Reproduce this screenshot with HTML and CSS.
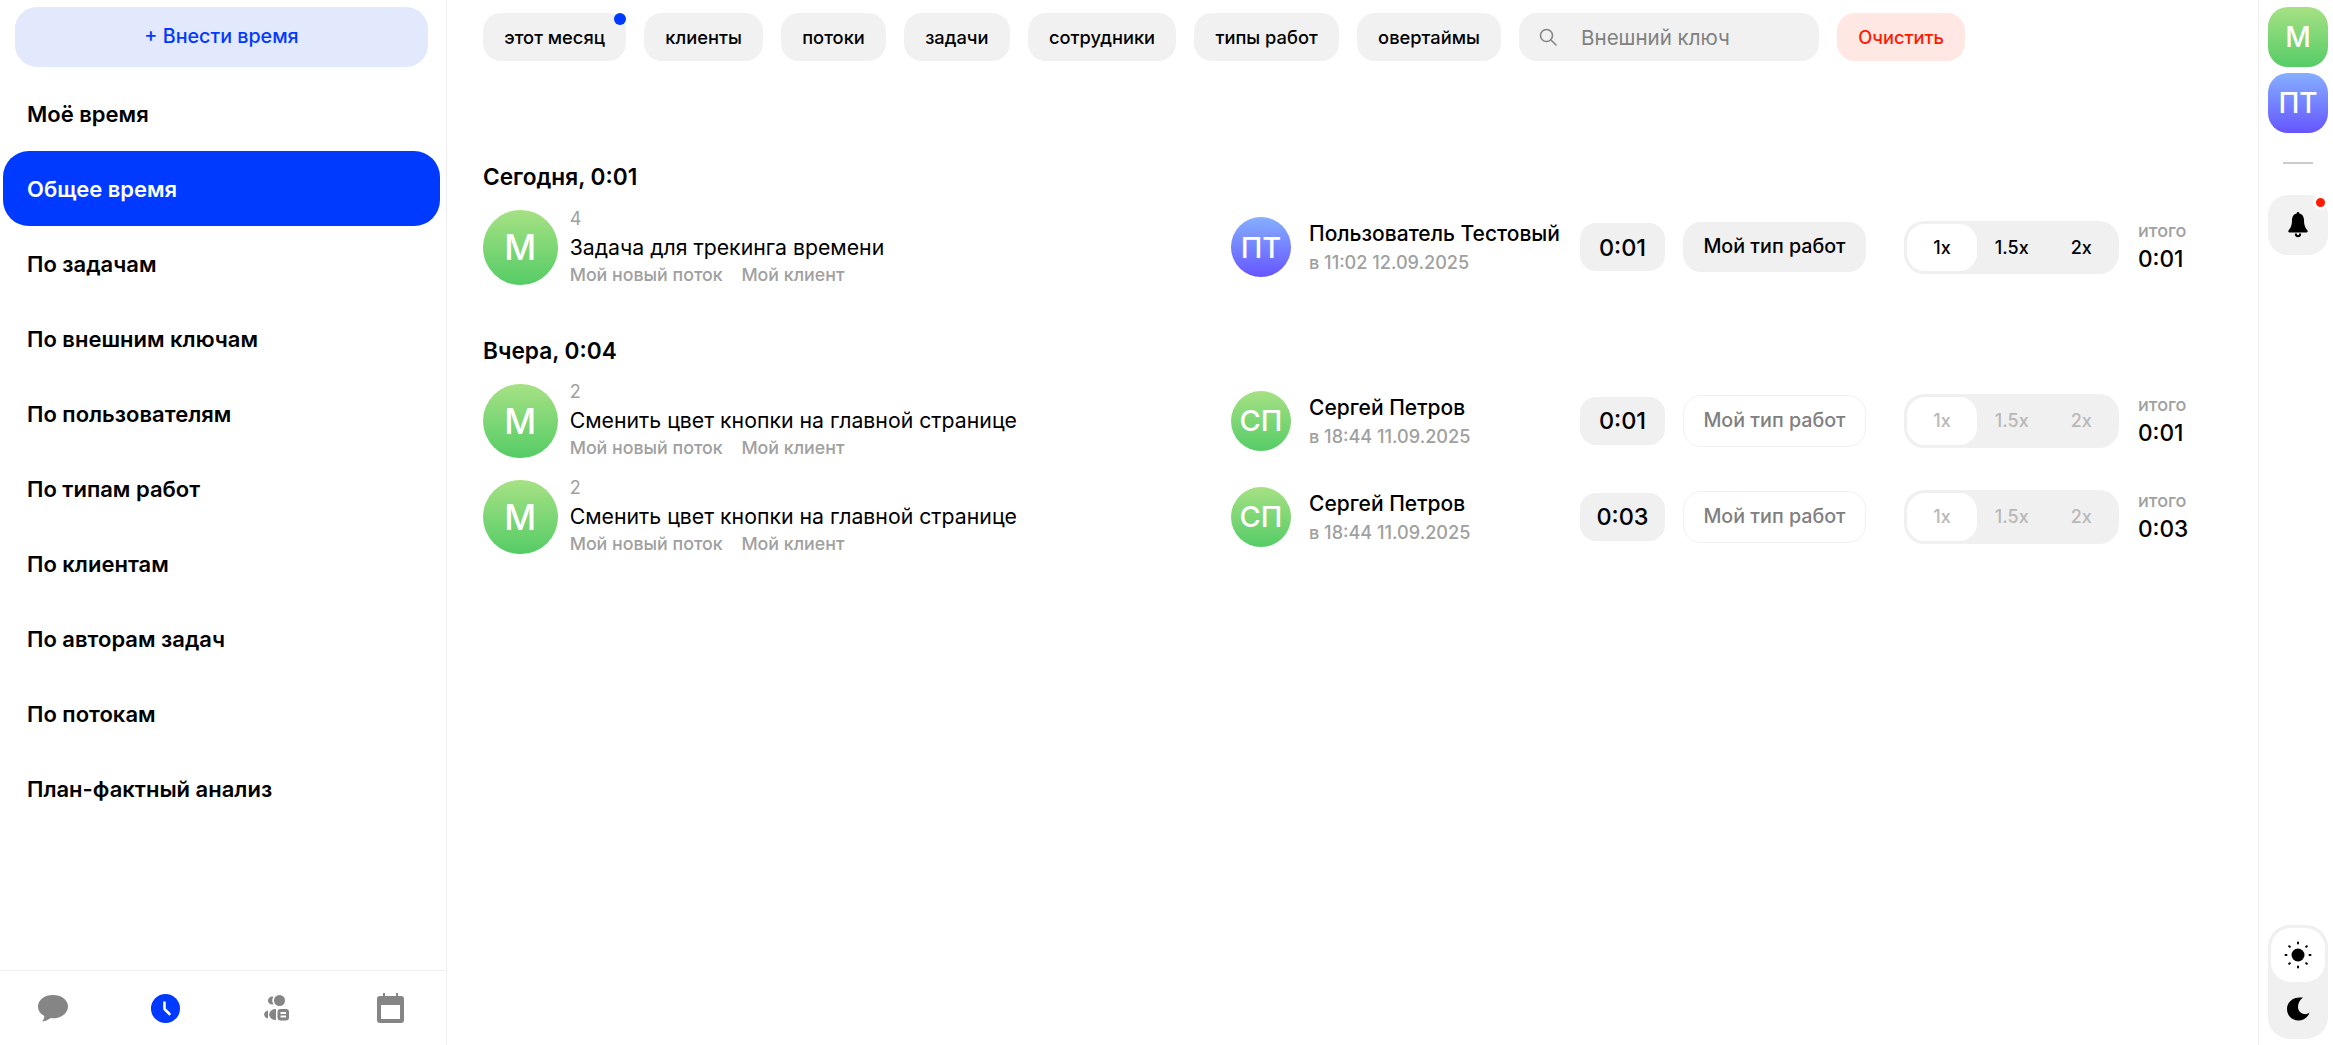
FILE: index.html
```html
<!DOCTYPE html>
<html lang="ru">
<head>
<meta charset="utf-8">
<title>Общее время</title>
<link rel="stylesheet" href="styles.css">
</head>
<body>
<div class="app">
  <aside class="sidebar">
    <button class="add-btn">+ Внести время</button>
    <nav class="nav">
      <a class="nav-item">Моё время</a>
      <a class="nav-item active">Общее время</a>
      <a class="nav-item">По задачам</a>
      <a class="nav-item">По внешним ключам</a>
      <a class="nav-item">По пользователям</a>
      <a class="nav-item">По типам работ</a>
      <a class="nav-item">По клиентам</a>
      <a class="nav-item">По авторам задач</a>
      <a class="nav-item">По потокам</a>
      <a class="nav-item">План-фактный анализ</a>
    </nav>
    <div class="tabs">
      <span class="tab"><svg width="30" height="27" viewBox="0 0 30 27"><path fill="#858585" d="M15 0C6.700 0 0 4.800 0 11.500c0 4.100 2.500 7.400 6.300 9.400.1 2-.8 4-2.300 5.600 3.200-.1 6.300-1.500 8.600-3.400.8.100 1.600.2 2.400.2 8.300 0 15-5.100 15-11.800S23.300 0 15 0z"/></svg></span>
      <span class="tab"><svg width="29" height="29" viewBox="0 0 29 29"><circle cx="14.500" cy="14.500" r="14.500" fill="#0039ff"/><path d="M13.500 8.500v6.500l5 5" fill="none" stroke="#fff" stroke-width="2.600" stroke-linecap="round" stroke-linejoin="round"/></svg></span>
      <span class="tab"><svg width="25" height="26" viewBox="0 0 25 26"><g fill="#858585"><circle cx="15.500" cy="5.500" r="5.500"/><path d="M9.500 1.800A4 4 0 1 0 9.500 9.200 6.500 6.500 0 0 1 9.500 1.800z"/><path d="M4 15.500V23.500A5 5 0 0 1 0 19.500 5 5 0 0 1 4 15.500z"/><path d="M12 14V25A7 7 0 0 1 5 19.500 7 7 0 0 1 12 14z"/><rect x="13.500" y="14" width="11.500" height="11.500" rx="3"/></g><path d="M16.500 18h5.500M16.500 21.500h5.500" stroke="#fff" stroke-width="1.800"/></svg></span>
      <span class="tab"><svg width="27" height="30" viewBox="0 0 27 30"><path fill="#858585" d="M6 0h2v3h11V0h2v3h3a3 3 0 0 1 3 3v21a3 3 0 0 1-3 3H3a3 3 0 0 1-3-3V6a3 3 0 0 1 3-3h3z"/><rect x="4" y="12" width="19" height="14" fill="#fff"/></svg></span>
    </div>
  </aside>

  <main class="main">
    <div class="filters">
      <span class="chip">этот месяц<i class="chip-dot"></i></span>
      <span class="chip">клиенты</span>
      <span class="chip">потоки</span>
      <span class="chip">задачи</span>
      <span class="chip">сотрудники</span>
      <span class="chip">типы работ</span>
      <span class="chip">овертаймы</span>
      <label class="search">
        <svg width="18" height="18" viewBox="0 0 18 18"><circle cx="7.500" cy="7.500" r="6" fill="none" stroke="#858585" stroke-width="1.600"/><path d="M12 12l5 5" stroke="#858585" stroke-width="1.600" stroke-linecap="round"/></svg>
        <span>Внешний ключ</span>
      </label>
      <span class="chip clear">Очистить</span>
    </div>

    <section class="day first">
      <h2 class="day-title">Сегодня, 0:01</h2>
      <div class="row">
        <div class="task">
          <div class="ava ava-task green">М</div>
          <div class="task-text">
            <div class="task-num">4</div>
            <div class="task-title">Задача для трекинга времени</div>
            <div class="task-sub"><span>Мой новый поток</span><span>Мой клиент</span></div>
          </div>
        </div>
        <div class="user">
          <div class="ava ava-user blue">ПТ</div>
          <div class="user-text">
            <div class="user-name">Пользователь Тестовый</div>
            <div class="user-date">в 11:02 12.09.2025</div>
          </div>
        </div>
        <div class="time">0:01</div>
        <div class="type">Мой тип работ</div>
        <div class="mult"><span class="on">1x</span><span>1.5x</span><span>2x</span></div>
        <div class="total"><small>итого</small><b>0:01</b></div>
      </div>
    </section>

    <section class="day">
      <h2 class="day-title">Вчера, 0:04</h2>
      <div class="row">
        <div class="task">
          <div class="ava ava-task green">М</div>
          <div class="task-text">
            <div class="task-num">2</div>
            <div class="task-title">Сменить цвет кнопки на главной странице</div>
            <div class="task-sub"><span>Мой новый поток</span><span>Мой клиент</span></div>
          </div>
        </div>
        <div class="user">
          <div class="ava ava-user green">СП</div>
          <div class="user-text">
            <div class="user-name">Сергей Петров</div>
            <div class="user-date">в 18:44 11.09.2025</div>
          </div>
        </div>
        <div class="time">0:01</div>
        <div class="type off">Мой тип работ</div>
        <div class="mult off"><span class="on">1x</span><span>1.5x</span><span>2x</span></div>
        <div class="total"><small>итого</small><b>0:01</b></div>
      </div>
      <div class="row">
        <div class="task">
          <div class="ava ava-task green">М</div>
          <div class="task-text">
            <div class="task-num">2</div>
            <div class="task-title">Сменить цвет кнопки на главной странице</div>
            <div class="task-sub"><span>Мой новый поток</span><span>Мой клиент</span></div>
          </div>
        </div>
        <div class="user">
          <div class="ava ava-user green">СП</div>
          <div class="user-text">
            <div class="user-name">Сергей Петров</div>
            <div class="user-date">в 18:44 11.09.2025</div>
          </div>
        </div>
        <div class="time">0:03</div>
        <div class="type off">Мой тип работ</div>
        <div class="mult off"><span class="on">1x</span><span>1.5x</span><span>2x</span></div>
        <div class="total"><small>итого</small><b>0:03</b></div>
      </div>
    </section>
  </main>

  <aside class="rail">
    <div class="tile green">М</div>
    <div class="tile blue">ПТ</div>
    <div class="sep"></div>
    <div class="tile bell">
      <svg width="20" height="26" viewBox="0 0 20 26"><path d="M10 0c.8 0 1.300.6 1.300 1.400 3.200.7 4.700 3.200 4.700 6.600 0 4 .7 7.500 3.300 10.300.8.900.4 2.200-.8 2.200H1.500c-1.200 0-1.600-1.300-.8-2.200C3.300 15.500 4 12 4 8c0-3.400 1.500-5.900 4.700-6.600C8.700.6 9.200 0 10 0z"/><path d="M6.800 21.500a3.200 3.800 0 0 0 6.400 0h-2a1.200 1.800 0 0 1-2.400 0z"/></svg>
      <i class="bell-dot"></i>
    </div>
    <div class="theme">
      <div class="theme-opt on">
        <svg width="28" height="28" viewBox="0 0 28 28"><circle cx="14" cy="14" r="6.500"/><g stroke="#000" stroke-width="2" stroke-linecap="round"><path d="M14 1.500v1M14 25.500v1M1.500 14h1M25.500 14h1M5.200 5.200l.6.6M22.200 22.200l.6.6M5.200 22.800l.6-.6M22.200 5.800l.6-.6"/></g></svg>
      </div>
      <div class="theme-opt">
        <svg width="24" height="24" viewBox="0 0 24 24"><path d="M13.500 1C7 1 1 5.700 1 12.500S6.200 24 12.500 24c5.300 0 9.700-3.300 11-8-1.500 1.300-3.300 1.800-5.200 1.600-3.600-.4-6.300-3.300-6.300-7 0-4 1.700-7.300 5-9.600z" transform="translate(0 -.5)"/></svg>
      </div>
    </div>
  </aside>
</div>
</body>
</html>
```

FILE: styles.css
```css
* { box-sizing: border-box; }
html, body { margin: 0; height: 100%; }
body { font-family: Inter, "Noto Sans", sans-serif; color: #000; background: #fff; }

.app { display: flex; height: 100vh; overflow: hidden; }

/* left sidebar */
.sidebar { width: 447px; flex: none; display: flex; flex-direction: column; border-right: 1px solid #f0f0f0; }
.add-btn { margin: 7px 18px 0 15px; height: 60px; flex: none; padding: 0 0 2px; border: 0; border-radius: 22px; background: #e3e9fd; color: #0039ff; font: 500 19.7px Inter, sans-serif; }
.nav { margin-top: 9px; flex: 1; display: flex; flex-direction: column; }
.nav-item { height: 75px; flex: none; margin: 0 6px 0 3px; padding-left: 24px; display: flex; align-items: center; border-radius: 26px; font-size: 22px; font-weight: 600; }
.nav-item.active { background: #0039ff; color: #fff; }
.tabs { height: 75px; flex: none; padding-left: 38px; border-top: 1px solid #f0f0f0; display: flex; align-items: center; }
.tab { display: flex; align-items: center; justify-content: center; }
.tab:nth-child(2) { margin-left: 83px; }
.tab:nth-child(3) { margin-left: 84px; }
.tab:nth-child(4) { margin-left: 88px; }

/* main column */
.main { flex: 1; min-width: 0; padding: 13px 0 0 36px; }
.filters { display: flex; gap: 18px; }
.chip { position: relative; height: 48px; padding: 0 21.2px; display: flex; align-items: center; border-radius: 18px; background: #f1f1f1; font-size: 18.3px; font-weight: 500; white-space: nowrap; }
.chip-dot { position: absolute; top: 0; right: 0; width: 12px; height: 12px; border-radius: 50%; background: #0039ff; }
.chip.clear { background: #ffe8e4; color: #ff1a00; }
.search { width: 300px; height: 48px; padding-left: 20px; display: flex; align-items: center; gap: 24px; border-radius: 18px; background: #f1f1f1; color: #808080; font-size: 20.5px; }

.day { margin-top: 51px; }
.day.first { margin-top: 101px; }
.day-title { margin: 0 0 18px; font-size: 22.67px; line-height: 30px; font-weight: 600; }

.row { display: flex; align-items: center; height: 74.67px; margin-bottom: 21.33px; }
.row:last-child { margin-bottom: 0; }

.ava { display: flex; align-items: center; justify-content: center; flex: none; border-radius: 50%; color: #fff; font-weight: 500; }
.green { background: linear-gradient(#a6e184, #55cc66); }
.blue { background: linear-gradient(#85b0ff, #6655ff); }
.ava-task { width: 74.67px; height: 74.67px; font-size: 35px; }
.ava-user { width: 60px; height: 60px; font-size: 29px; }

.task { width: 748px; flex: none; display: flex; align-items: center; gap: 12px; }
.task-text { display: flex; flex-direction: column; padding-bottom: 3px; }
.task-num { font-size: 18px; line-height: 22px; color: #a0a0a0; }
.task-title { font-size: 21.25px; line-height: 35px; font-weight: 400; }
.task-sub { display: flex; gap: 18.67px; font-size: 17.8px; line-height: 19px; font-weight: 500; color: #a0a0a0; }

.user { width: 349px; flex: none; display: flex; align-items: center; gap: 18px; }
.user-text { padding-top: 2px; }
.user-name { font-size: 21px; line-height: 28px; font-weight: 500; }
.user-date { font-size: 18.1px; line-height: 28px; font-weight: 500; color: #a0a0a0; }

.time { width: 85px; height: 48px; flex: none; display: flex; align-items: center; justify-content: center; border-radius: 16px; background: #f0f0f0; font-size: 23.5px; font-weight: 500; }
.type { width: 183px; height: 50px; margin-left: 18px; flex: none; display: flex; align-items: center; justify-content: center; padding-bottom: 2px; border-radius: 18px; background: #f0f0f0; font-size: 19.7px; font-weight: 500; }
.type.off { height: 52px; background: #fff; border: 1px solid #f1f1f1; color: #808080; }

.mult { width: 215px; height: 53.33px; margin-left: 38px; flex: none; padding: 3px; display: flex; border-radius: 20px; background: #f0f0f0; font-size: 18px; font-weight: 500; }
.mult span { flex: 1; display: flex; align-items: center; justify-content: center; border-radius: 18px; }
.mult .on { flex: none; width: 70px; background: #fff; }
.mult.off { color: #b8b8b8; }

.total { margin-left: 19px; display: flex; flex-direction: column; }
.total small { font-size: 18px; line-height: 24px; font-weight: 500; color: #a0a0a0; }
.total b { font-size: 22.67px; line-height: 32px; font-weight: 500; }

/* right rail */
.rail { width: 75px; flex: none; padding: 7px 5px 6px 9px; display: flex; flex-direction: column; gap: 6px; align-items: center; border-left: 1px solid #f0f0f0; }
.tile { position: relative; width: 60px; height: 60px; flex: none; display: flex; align-items: center; justify-content: center; border-radius: 20px; color: #fff; font-size: 28px; font-weight: 500; }
.sep { width: 30px; height: 2px; flex: none; margin: 23px 0 25px; background: #ccc; }
.bell { background: #f1f1f1; }
.bell-dot { position: absolute; top: 0; right: 0; width: 15px; height: 15px; border-radius: 50%; background: #ff1a00; border: 3px solid #fff; }
.theme { margin-top: auto; width: 60px; height: 114px; padding: 3px; border-radius: 22px; background: #f0f0f0; }
.theme-opt { height: 54px; display: flex; align-items: center; justify-content: center; border-radius: 20px; }
.theme-opt.on { background: #fff; }
```
